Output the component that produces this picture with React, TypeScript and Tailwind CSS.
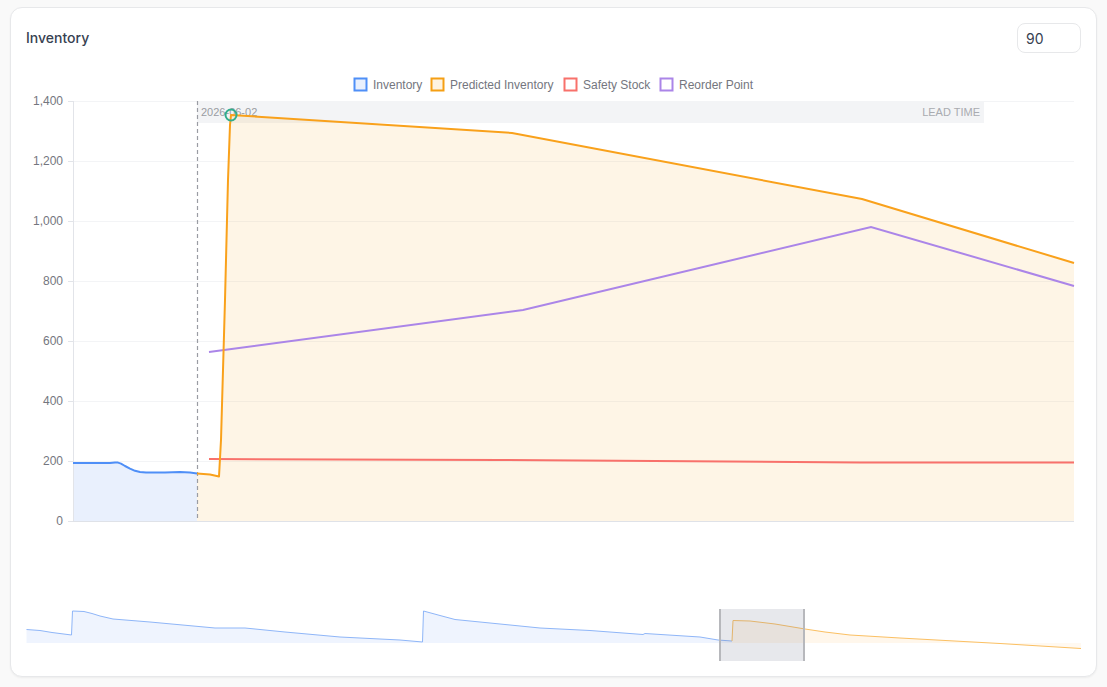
import React from "react";

const yTicks = [
  { label: "1,400", y: 101 },
  { label: "1,200", y: 161 },
  { label: "1,000", y: 221 },
  { label: "800", y: 281 },
  { label: "600", y: 341 },
  { label: "400", y: 401 },
  { label: "200", y: 461 },
  { label: "0", y: 521 },
];

const legend = [
  { label: "Inventory", box: 354.5, text: 373, stroke: "#4f8ff7", fill: "#e9f0fd" },
  { label: "Predicted Inventory", box: 431.5, text: 450, stroke: "#f59f14", fill: "#fef3e2" },
  { label: "Safety Stock", box: 564.5, text: 583, stroke: "#f8716b", fill: "#ffffff" },
  { label: "Reorder Point", box: 660.5, text: 679, stroke: "#ab85e8", fill: "#ffffff" },
];

const inventoryLine =
  "73,463 110,463 115,462.5 118,462.6 121,463.6 125,466 130,468.6 135,470.8 140,472 146,472.5 165,472.5 180,472 190,472.6 197,473.5";
const predictedLine = "197,473.5 210,474.5 219,476.5 221,440 225,300 228,180 230,125 231,115 512,133 862,199 1074,263";
const reorderLine = "209,352 523,310 871,227 1074,286";
const safetyLine = "209,459 500,460 860,462.5 1074,462.5";

const miniBlue =
  "26.5,629.5 40,630.5 52,632.5 71.5,635 72.5,611 84,611.5 92,613.5 100,616 113,619 150,622 215,628 245,628 285,632 340,637 400,640 422.5,642 423.5,611 440,615.5 455,619.5 470,621 540,628 590,630.5 643,634.5 645,633.5 700,637 718,640 732,641";
const miniOrange = "732,641 733,620.5 750,621 775,624 805,629 825,632 850,635 900,638 1000,643.5 1081,648.5";

export default function App() {
  return (
    <div className="h-[687px] w-[1107px] bg-[#f9f9f9] px-[10px] pt-[7px] font-['Inter',sans-serif]">
      <div className="flex h-[670px] w-[1087px] flex-col gap-3 rounded-xl border border-[#e7e8ea] bg-white px-[15px] py-[15px] shadow-xs">
        <div className="flex h-[30px] items-center justify-between">
          <h2 className="text-sm font-medium text-[#374151]">Inventory</h2>
          <input
            readOnly
            value="90"
            className="h-[30px] w-16 rounded-lg border border-[#e7e8ea] bg-white px-2 text-sm text-[#374151] outline-none"
          />
        </div>
        <svg
          className="block h-[596px] w-[1055px]"
          viewBox="26 65 1055 596"
          fontFamily="'Liberation Sans', Arial, sans-serif"
        >
          {/* legend */}
          {legend.map((l) => (
            <g key={l.label}>
              <rect x={l.box} y={78.5} width={12} height={12} fill={l.fill} stroke={l.stroke} strokeWidth={2} />
              <text x={l.text} y={89} fontSize={12} fill="#74767e">
                {l.label}
              </text>
            </g>
          ))}

          {/* lead time band */}
          <rect x={197} y={101} width={787} height={22} fill="#f3f4f6" />

          {/* grid */}
          {yTicks.slice(0, 7).map((t) => (
            <line key={t.y} x1={73} x2={1074} y1={t.y + 0.5} y2={t.y + 0.5} stroke="#f3f4f6" />
          ))}

          {/* areas */}
          <polygon points={`${inventoryLine} 197,521 73,521`} fill="#e9f0fd" />
          <polygon points={`${predictedLine} 1074,521 197,521`} fill="#f59e0b" fillOpacity={0.1} />

          {/* axes */}
          <line x1={73.5} x2={73.5} y1={101} y2={521} stroke="#e2e4e9" />
          <line x1={73} x2={1074} y1={521.5} y2={521.5} stroke="#dfe2e8" />
          {yTicks.map((t) => (
            <g key={t.label}>
              <line x1={68} x2={73} y1={t.y + 0.5} y2={t.y + 0.5} stroke="#e2e4e9" />
              <text x={63} y={t.y + 4} fontSize={12} textAnchor="end" fill="#74767e">
                {t.label}
              </text>
            </g>
          ))}

          {/* lead time labels */}
          <text x={201} y={116} fontSize={11} fill="#9a9ca3">
            2026-06-02
          </text>
          <text x={980} y={116} fontSize={11} textAnchor="end" fill="#a9abb0">
            LEAD TIME
          </text>
          <line x1={197.5} x2={197.5} y1={101} y2={521} stroke="#9a9ca3" strokeWidth={1.2} strokeDasharray="4 3" />

          {/* series */}
          <polyline points={safetyLine} fill="none" stroke="#f8716b" strokeWidth={2} />
          <polyline points={reorderLine} fill="none" stroke="#ab85e8" strokeWidth={2} />
          <polyline points={predictedLine} fill="none" stroke="#f9a11b" strokeWidth={2} strokeLinejoin="round" />
          <polyline points={inventoryLine} fill="none" stroke="#4f8ff7" strokeWidth={2} strokeLinejoin="round" />
          <circle cx={231} cy={115} r={5.5} fill="none" stroke="#31ad8c" strokeWidth={2} />

          {/* data zoom */}
          <polygon points={`${miniBlue} 732,643 26.5,643`} fill="#eff4fe" />
          <polygon points="732,641 733,620.5 750,621 775,624 805,629 825,632 850,635 900,638 990,643 732,643" fill="#fff7ec" />
          <polygon points="990,643 1081,648.5 1081,643" fill="#fff9f1" />
          <polyline points={miniBlue} fill="none" stroke="#8fb6f8" strokeWidth={1} />
          <polyline points={miniOrange} fill="none" stroke="#fbc063" strokeWidth={1} />
          <rect x={720} y={609} width={84} height={52} fill="#7a8096" fillOpacity={0.18} />
          <rect x={719} y={609} width={2} height={52} fill="#b7b8bc" />
          <rect x={803} y={609} width={2} height={52} fill="#b7b8bc" />
        </svg>
      </div>
    </div>
  );
}
